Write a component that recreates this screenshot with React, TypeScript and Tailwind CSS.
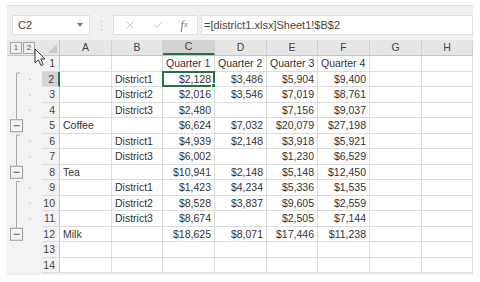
import React from 'react';
import { X, Check } from 'lucide-react';

const cols = ['A', 'B', 'C', 'D', 'E', 'F', 'G', 'H'];
const widths = ['w-[52px]', 'w-[51px]', 'w-[52px]', 'w-[52px]', 'w-[51px]', 'w-[52px]', 'w-[52px]', 'w-[51px]'];

// A..F per row (G, H empty)
const rows: string[][] = [
  ['', '', 'Quarter 1', 'Quarter 2', 'Quarter 3', 'Quarter 4'],
  ['', 'District1', '$2,128', '$3,486', '$5,904', '$9,400'],
  ['', 'District2', '$2,016', '$3,546', '$7,019', '$8,761'],
  ['', 'District3', '$2,480', '', '$7,156', '$9,037'],
  ['Coffee', '', '$6,624', '$7,032', '$20,079', '$27,198'],
  ['', 'District1', '$4,939', '$2,148', '$3,918', '$5,921'],
  ['', 'District3', '$6,002', '', '$1,230', '$6,529'],
  ['Tea', '', '$10,941', '$2,148', '$5,148', '$12,450'],
  ['', 'District1', '$1,423', '$4,234', '$5,336', '$1,535'],
  ['', 'District2', '$8,528', '$3,837', '$9,605', '$2,559'],
  ['', 'District3', '$8,674', '', '$2,505', '$7,144'],
  ['Milk', '', '$18,625', '$8,071', '$17,446', '$11,238'],
  [],
  [],
];

const RH = 15.5;
const detailRows = [2, 3, 4, 6, 7, 9, 10, 11];
const groups = [
  { from: 2, sum: 5 },
  { from: 6, sum: 8 },
  { from: 9, sum: 12 },
];

function Outline() {
  return (
    <svg width="35" height={RH * 14} className="block">
      {detailRows.map((r) => (
        <rect key={r} x="22.5" y={(r - 0.5) * RH - 0.5} width="1" height="1" fill="#9a9a9a" />
      ))}
      {groups.map((g) => {
        const top = (g.from - 1) * RH + 1.5;
        const cy = (g.sum - 0.5) * RH;
        return (
          <g key={g.sum}>
            <path d={`M13 ${top} H9.5 V${cy - 6}`} stroke="#a8a8a8" strokeWidth="1" fill="none" />
            <rect x="3.5" y={cy - 6} width="12" height="12" fill="#f4f4f4" stroke="#9c9c9c" />
            <line x1="6.5" y1={cy} x2="12.5" y2={cy} stroke="#555" strokeWidth="1" />
          </g>
        );
      })}
    </svg>
  );
}

function Cursor() {
  return (
    <svg width="14" height="20" viewBox="0 0 14 20" className="absolute left-[34px] top-[48px]">
      <path d="M1 1 V15 L4.5 11.8 L7 17.5 L9.2 16.6 L6.8 11 H11 Z" fill="#fff" stroke="#333" strokeWidth="1" strokeLinejoin="round" />
    </svg>
  );
}

export default function App() {
  return (
    <div className="relative w-[480px] h-[282px] bg-white pt-[5px] pl-[7px] font-['Liberation_Sans',Arial,sans-serif] text-[#333]">
      <div className="w-[466px] h-[270px] bg-[#f1f1f1] border-t border-[#e2e2e2]">
        {/* formula bar */}
        <div className="flex h-[34px] pt-[9px] pl-[5px] pb-[5px]">
          <div className="flex items-center justify-between w-[78px] h-[20px] bg-white border border-[#e0e0e0] pl-[5px] pr-[6px] text-[11px] text-[#444]">
            <span>C2</span>
            <svg width="6" height="4"><path d="M0 0 H6 L3 4 Z" fill="#777" /></svg>
          </div>
          <div className="flex items-center justify-center w-[23px]">
            <svg width="3" height="11">
              <circle cx="1.5" cy="1.5" r="0.8" fill="#c4c4c4" />
              <circle cx="1.5" cy="5.5" r="0.8" fill="#c4c4c4" />
              <circle cx="1.5" cy="9.5" r="0.8" fill="#c4c4c4" />
            </svg>
          </div>
          <div className="flex items-center w-[85px] h-[20px] bg-white border border-[#e0e0e0] text-[#b5b5b5]">
            <div className="w-[30px] flex justify-center pl-[2px]"><X size={12} strokeWidth={1.6} /></div>
            <div className="w-[27px] flex justify-center"><Check size={12} strokeWidth={1.6} /></div>
            <div className="w-[26px] flex justify-center font-['Liberation_Serif',serif] italic text-[12px] text-[#777]">
              f<span className="text-[8px] mt-[3px]">x</span>
            </div>
          </div>
          <div className="flex items-center flex-1 h-[20px] ml-[3px] bg-white border border-[#e0e0e0] pl-[2px] text-[11px] text-[#444]">
            =[district1.xlsx]Sheet1!$B$2
          </div>
        </div>

        {/* sheet */}
        <div className="flex">
          <div className="w-[35px]">
            <div className="h-[16px] bg-[#e6e6e6] border-b border-[#c6c6c6] flex gap-[1px] pl-[3px] pt-[2px]">
              <div className="w-[12px] h-[12px] border border-[#a9a9a9] bg-[#eeeeee] text-[8px] leading-[10px] text-center text-[#555]">1</div>
              <div className="w-[12px] h-[12px] border border-[#a9a9a9] bg-[#eeeeee] text-[8px] leading-[10px] text-center text-[#555]">2</div>
            </div>
            <div className="bg-[#f3f3f3]">
              <Outline />
            </div>
          </div>
          <div>
            <div className="flex h-[16px] bg-[#e6e6e6] border-b border-[#c6c6c6] text-[10.5px] text-[#444]">
              <div className="relative w-[18px] border-r border-[#c6c6c6]">
                <svg width="9" height="9" className="absolute right-[2px] bottom-[2px]">
                  <path d="M9 0 V9 H0 Z" fill="#c9c9c9" />
                </svg>
              </div>
              {cols.map((c, i) => (
                <div
                  key={c}
                  className={`${widths[i]} flex items-center justify-center border-r border-[#cfcfcf] ${
                    c === 'C' ? 'bg-[#d3d3d3] border-b-2 border-b-[#217346]' : ''
                  }`}
                >
                  {c}
                </div>
              ))}
            </div>
            {rows.map((r, ri) => (
              <div key={ri} className="flex h-[15.5px] text-[10.5px] leading-[14px]">
                <div
                  className={`w-[18px] flex items-center justify-end pr-[4px] border-b border-[#dcdcdc] text-[10.5px] text-[#444] ${
                    ri === 1 ? 'bg-[#d4d4d4] border-r-2 border-r-[#217346]' : 'bg-[#f3f3f3] border-r border-r-[#c6c6c6]'
                  }`}
                >
                  {ri + 1}
                </div>
                {cols.map((c, ci) => {
                  const v = r[ci] || '';
                  const num = v.startsWith('$');
                  return (
                    <div
                      key={c}
                      className={`relative ${widths[ci]} bg-white border-r border-b border-[#dcdcdc] flex items-center whitespace-nowrap ${
                        num ? 'justify-end pr-[3px]' : 'pl-[3px]'
                      }`}
                    >
                      {v}
                      {ri === 1 && c === 'C' && (
                        <div className="absolute -left-[1px] -top-[1px] -right-[1px] -bottom-[1px] border-2 border-[#217346]">
                          <div className="absolute -right-[3px] -bottom-[3px] w-[5px] h-[5px] bg-[#217346] border border-white" />
                        </div>
                      )}
                    </div>
                  );
                })}
              </div>
            ))}
          </div>
        </div>
      </div>
      <Cursor />
    </div>
  );
}
